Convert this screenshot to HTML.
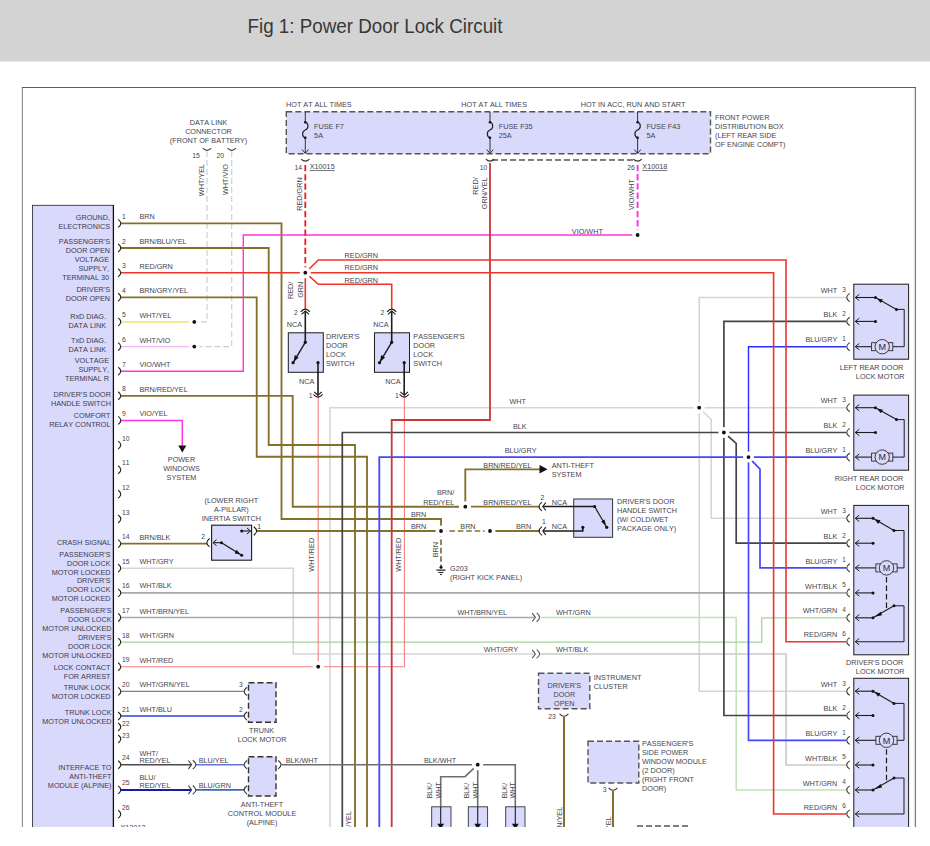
<!DOCTYPE html>
<html lang="en">
<head>
<meta charset="utf-8">
<title>Fig 1: Power Door Lock Circuit</title>
<style>
html,body{margin:0;padding:0;background:#fff;}
body{width:930px;height:846px;overflow:hidden;}
svg{display:block;}
svg text{font-family:"Liberation Sans",Arial,Helvetica,sans-serif;font-size:7.25px;fill:#45454f;font-kerning:none;}
</style>
</head>
<body>
<svg width="930" height="846" viewBox="0 0 930 846">
<defs><clipPath id="clipd"><rect x="0" y="62" width="930" height="765"/></clipPath></defs>
<rect x="0" y="0" width="930" height="61.5" fill="#d3d3d3"/>
<text x="247.5" y="33.2" style="font-size:19.4px;fill:#383838" textLength="255" lengthAdjust="spacingAndGlyphs">Fig 1: Power Door Lock Circuit</text>
<g clip-path="url(#clipd)">
<path d="M22.4 830 V87.5" stroke="#8a8a8a" stroke-width="1.1" fill="none"/>
<path d="M915.4 830 V87.5" stroke="#808080" stroke-width="1.3" fill="none"/>
<path d="M21.9 87.5 H916" stroke="#5e5e5e" stroke-width="1.1" fill="none"/>
<path d="M207.0 151.0 L207.0 321.9 L198.0 321.9" stroke="#cfcfcf" stroke-width="1.2" fill="none" stroke-dasharray="6 3"/>
<path d="M231.7 151.0 L231.7 346.6 L198.0 346.6" stroke="#cfcfcf" stroke-width="1.2" fill="none" stroke-dasharray="6 3"/>
<path d="M330.0 830.0 L330.0 407.7 L846.0 407.7" stroke="#d6d6d6" stroke-width="1.6" fill="none"/>
<path d="M846.0 297.5 L699.2 297.5 L699.2 691.2 L846.0 691.2" stroke="#d6d6d6" stroke-width="1.6" fill="none"/>
<path d="M699.2 407.7 L711.2 419.5 L711.2 518.3 L846.0 518.3" stroke="#d6d6d6" stroke-width="1.6" fill="none"/>
<path d="M121.0 568.2 L293.3 568.2 L293.3 654.0 L534.5 654.0" stroke="#d6d6d6" stroke-width="1.6" fill="none"/>
<path d="M540.5 654.0 L786.0 654.0 L786.0 765.0 L846.0 765.0" stroke="#c9c9c9" stroke-width="1.6" fill="none"/>
<path d="M121.0 592.9 L846.0 592.9" stroke="#a8a8a8" stroke-width="1.6" fill="none"/>
<path d="M121.0 617.5 L534.5 617.5" stroke="#a8a8a8" stroke-width="1.6" fill="none"/>
<path d="M540.5 617.6 L736.2 617.6 L736.2 790.0 L846.0 790.0" stroke="#bfe3b8" stroke-width="1.5" fill="none"/>
<path d="M121.0 642.1 L761.7 642.1 L761.7 617.8 L846.0 617.8" stroke="#9fd895" stroke-width="1.3" fill="none"/>
<path d="M121.0 666.7 L404.4 666.7 L404.4 394.0" stroke="#f58080" stroke-width="1.1" fill="none"/>
<path d="M318.2 666.7 L318.2 394.0" stroke="#f58080" stroke-width="1.1" fill="none"/>
<path d="M121.0 223.4 L281.5 223.4 L281.5 519.0 L441.0 519.0 L441.0 531.0" stroke="#84702a" stroke-width="1.85" fill="none"/>
<path d="M121.0 248.0 L268.7 248.0 L268.7 445.0 L355.0 445.0 L355.0 830.0" stroke="#84702a" stroke-width="1.85" fill="none"/>
<path d="M121.0 297.3 L256.7 297.3 L256.7 456.7 L367.0 456.7 L367.0 830.0" stroke="#84702a" stroke-width="1.85" fill="none"/>
<path d="M121.0 395.8 L292.7 395.8 L292.7 506.7 L459.0 506.7" stroke="#84702a" stroke-width="1.85" fill="none"/>
<path d="M471.0 506.6 L540.0 506.6" stroke="#84702a" stroke-width="1.85" fill="none"/>
<path d="M465.3 506.7 L465.3 469.3 L541.0 469.3" stroke="#84702a" stroke-width="1.85" fill="none"/>
<path d="M121.0 543.6 L207.0 543.6" stroke="#84702a" stroke-width="1.85" fill="none"/>
<path d="M257.0 531.0 L441.0 531.0" stroke="#84702a" stroke-width="1.85" fill="none"/>
<path d="M441.0 531.0 L490.0 531.0" stroke="#84702a" stroke-width="1.7" fill="none" stroke-dasharray="5.6 2.8"/>
<path d="M495.0 531.0 L540.0 531.0" stroke="#84702a" stroke-width="1.85" fill="none"/>
<path d="M441.0 531.0 L441.0 566.0" stroke="#84702a" stroke-width="1.7" fill="none" stroke-dasharray="5.6 2.8"/>
<path d="M564.0 717.0 L564.0 830.0" stroke="#84702a" stroke-width="2.0" fill="none"/>
<path d="M613.0 791.0 L613.0 830.0" stroke="#84702a" stroke-width="2.0" fill="none"/>
<path d="M342.3 830.0 L342.3 432.5 L846.0 432.5" stroke="#454545" stroke-width="1.7" fill="none"/>
<path d="M846.0 321.4 L723.9 321.4 L723.9 715.5 L846.0 715.5" stroke="#454545" stroke-width="1.7" fill="none"/>
<path d="M723.9 432.5 L736.2 443.4 L736.2 543.2 L846.0 543.2" stroke="#454545" stroke-width="1.7" fill="none"/>
<path d="M379.3 830.0 L379.3 457.1 L846.0 457.1" stroke="#4646ff" stroke-width="1.8" fill="none"/>
<path d="M846.0 346.7 L748.5 346.7 L748.5 457.1" stroke="#2c2cff" stroke-width="1.4" fill="none"/>
<path d="M748.5 457.1 L748.5 740.3 L846.0 740.3" stroke="#4646ff" stroke-width="1.7" fill="none"/>
<path d="M748.5 457.1 L760.0 469.2 L760.0 567.9 L846.0 567.9" stroke="#4646ff" stroke-width="1.7" fill="none"/>
<path d="M121.0 371.2 L243.3 371.2 L243.3 235.0 L637.6 235.0" stroke="#ff33dd" stroke-width="1.4" fill="none"/>
<path d="M637.6 164.9 L637.6 235.0" stroke="#ff33dd" stroke-width="1.9" fill="none" stroke-dasharray="6.3 2.9"/>
<path d="M121.0 420.4 L182.3 420.4 L182.3 446.0" stroke="#ff33dd" stroke-width="1.5" fill="none"/>
<path d="M178.3 445.5 H186.3 L182.3 452.5 Z" fill="#111"/>
<path d="M121.0 321.9 L189.0 321.9" stroke="#f0e428" stroke-width="1.3" fill="none"/>
<path d="M121.0 346.6 L189.0 346.6" stroke="#f2b4f2" stroke-width="1.4" fill="none"/>
<path d="M490.0 163.0 L490.0 420.0 L391.7 420.0 L391.7 830.0" stroke="#c83838" stroke-width="1.8" fill="none"/>
<path d="M121.0 272.7 L773.6 272.7 L773.6 814.0 L846.0 814.0" stroke="#f03428" stroke-width="1.6" fill="none"/>
<path d="M305.3 272.7 L318.3 260.0 L786.0 260.0 L786.0 641.7 L846.0 641.7" stroke="#f03428" stroke-width="1.6" fill="none"/>
<path d="M305.3 272.7 L318.3 284.3 L391.7 284.3 L391.7 309.0" stroke="#f03428" stroke-width="1.6" fill="none"/>
<path d="M305.3 272.7 L305.3 309.0" stroke="#f03428" stroke-width="1.6" fill="none"/>
<path d="M305.3 165.0 L305.3 272.7" stroke="#ee1c1c" stroke-width="1.8" fill="none" stroke-dasharray="6.3 2.9"/>
<path d="M121.0 691.4 L244.0 691.4" stroke="#808080" stroke-width="1.2" fill="none"/>
<path d="M121.0 716.0 L244.0 716.0" stroke="#2a44d8" stroke-width="1.4" fill="none"/>
<path d="M121.0 764.7 L191.0 764.7" stroke="#4a4a4a" stroke-width="1.4" fill="none"/>
<path d="M196.0 764.7 L244.0 764.7" stroke="#6674d8" stroke-width="1.5" fill="none"/>
<path d="M121.0 789.9 L191.0 789.9" stroke="#1a1aa8" stroke-width="2.0" fill="none"/>
<path d="M196.0 789.9 L244.0 789.9" stroke="#3a6ab0" stroke-width="1.6" fill="none"/>
<path d="M281.5 764.7 L472.0 764.7" stroke="#6e6e6e" stroke-width="1.6" fill="none"/>
<path d="M483.0 764.7 L515.3 764.7 L515.3 807.0" stroke="#6e6e6e" stroke-width="1.6" fill="none"/>
<path d="M477.7 764.7 L477.7 807.0" stroke="#6e6e6e" stroke-width="1.6" fill="none"/>
<path d="M477.7 764.7 L465.0 776.7 L440.7 776.7 L440.7 807.0" stroke="#6e6e6e" stroke-width="1.6" fill="none"/>
<circle cx="305.3" cy="272.7" r="5.5" fill="#fff"/>
<circle cx="305.3" cy="272.7" r="1.9" fill="#111"/>
<circle cx="637.6" cy="235.0" r="5.5" fill="#fff"/>
<circle cx="637.6" cy="235.0" r="1.9" fill="#111"/>
<circle cx="194.3" cy="321.9" r="5.5" fill="#fff"/>
<circle cx="194.3" cy="321.9" r="1.9" fill="#111"/>
<circle cx="194.3" cy="346.6" r="5.5" fill="#fff"/>
<circle cx="194.3" cy="346.6" r="1.9" fill="#111"/>
<circle cx="699.2" cy="407.7" r="5.5" fill="#fff"/>
<circle cx="699.2" cy="407.7" r="1.9" fill="#111"/>
<circle cx="723.9" cy="432.5" r="5.5" fill="#fff"/>
<circle cx="723.9" cy="432.5" r="1.9" fill="#111"/>
<circle cx="748.5" cy="457.1" r="5.5" fill="#fff"/>
<circle cx="748.5" cy="457.1" r="1.9" fill="#111"/>
<circle cx="465.3" cy="506.7" r="5.5" fill="#fff"/>
<circle cx="465.3" cy="506.7" r="1.9" fill="#111"/>
<circle cx="441.0" cy="531.0" r="5.5" fill="#fff"/>
<circle cx="441.0" cy="531.0" r="1.9" fill="#111"/>
<circle cx="490.0" cy="531.0" r="5.5" fill="#fff"/>
<circle cx="490.0" cy="531.0" r="1.9" fill="#111"/>
<circle cx="318.2" cy="666.7" r="5.5" fill="#fff"/>
<circle cx="318.2" cy="666.7" r="1.9" fill="#111"/>
<circle cx="477.7" cy="764.7" r="5.5" fill="#fff"/>
<circle cx="477.7" cy="764.7" r="1.9" fill="#111"/>
<rect x="32.5" y="205.3" width="81.0" height="624.7" fill="#d9d9fb" stroke="#222" stroke-width="0.8"/>
<path d="M113.4 205.0 L113.4 830.0" stroke="#111" stroke-width="1.3" fill="none"/>
<text x="110.0" y="219.9" text-anchor="end" style="fill:#3c3c50;">GROUND,</text>
<text x="110.0" y="228.8" text-anchor="end" style="fill:#3c3c50;">ELECTRONICS</text>
<text x="110.0" y="244.3" text-anchor="end" style="fill:#3c3c50;">PASSENGER'S</text>
<text x="110.0" y="253.2" text-anchor="end" style="fill:#3c3c50;">DOOR OPEN</text>
<text x="109.0" y="262.1" text-anchor="end" style="fill:#3c3c50;">VOLTAGE</text>
<text x="109.0" y="271.1" text-anchor="end" style="fill:#3c3c50;">SUPPLY,</text>
<text x="109.0" y="280.0" text-anchor="end" style="fill:#3c3c50;">TERMINAL 30</text>
<text x="110.0" y="292.4" text-anchor="end" style="fill:#3c3c50;">DRIVER'S</text>
<text x="110.0" y="301.4" text-anchor="end" style="fill:#3c3c50;">DOOR OPEN</text>
<text x="106.0" y="319.3" text-anchor="end" style="fill:#3c3c50;">RxD DIAG.</text>
<text x="106.0" y="328.2" text-anchor="end" style="fill:#3c3c50;">DATA LINK</text>
<text x="106.0" y="343.4" text-anchor="end" style="fill:#3c3c50;">TxD DIAG.</text>
<text x="106.0" y="352.4" text-anchor="end" style="fill:#3c3c50;">DATA LINK</text>
<text x="109.0" y="362.9" text-anchor="end" style="fill:#3c3c50;">VOLTAGE</text>
<text x="109.0" y="371.9" text-anchor="end" style="fill:#3c3c50;">SUPPLY,</text>
<text x="109.0" y="380.8" text-anchor="end" style="fill:#3c3c50;">TERMINAL R</text>
<text x="111.0" y="396.9" text-anchor="end" style="fill:#3c3c50;">DRIVER'S DOOR</text>
<text x="111.0" y="405.9" text-anchor="end" style="fill:#3c3c50;">HANDLE SWITCH</text>
<text x="110.5" y="418.2" text-anchor="end" style="fill:#3c3c50;">COMFORT</text>
<text x="110.5" y="427.2" text-anchor="end" style="fill:#3c3c50;">RELAY CONTROL</text>
<text x="111.0" y="544.9" text-anchor="end" style="fill:#3c3c50;">CRASH SIGNAL</text>
<text x="110.5" y="557.2" text-anchor="end" style="fill:#3c3c50;">PASSENGER'S</text>
<text x="110.5" y="566.2" text-anchor="end" style="fill:#3c3c50;">DOOR LOCK</text>
<text x="110.5" y="575.1" text-anchor="end" style="fill:#3c3c50;">MOTOR LOCKED</text>
<text x="110.5" y="583.0" text-anchor="end" style="fill:#3c3c50;">DRIVER'S</text>
<text x="110.5" y="592.0" text-anchor="end" style="fill:#3c3c50;">DOOR LOCK</text>
<text x="110.5" y="600.9" text-anchor="end" style="fill:#3c3c50;">MOTOR LOCKED</text>
<text x="111.5" y="613.3" text-anchor="end" style="fill:#3c3c50;">PASSENGER'S</text>
<text x="111.5" y="622.3" text-anchor="end" style="fill:#3c3c50;">DOOR LOCK</text>
<text x="111.5" y="631.2" text-anchor="end" style="fill:#3c3c50;">MOTOR UNLOCKED</text>
<text x="111.5" y="640.0" text-anchor="end" style="fill:#3c3c50;">DRIVER'S</text>
<text x="111.5" y="649.0" text-anchor="end" style="fill:#3c3c50;">DOOR LOCK</text>
<text x="111.5" y="657.9" text-anchor="end" style="fill:#3c3c50;">MOTOR UNLOCKED</text>
<text x="110.5" y="669.6" text-anchor="end" style="fill:#3c3c50;">LOCK CONTACT</text>
<text x="110.5" y="678.6" text-anchor="end" style="fill:#3c3c50;">FOR ARREST</text>
<text x="110.5" y="690.3" text-anchor="end" style="fill:#3c3c50;">TRUNK LOCK</text>
<text x="110.5" y="699.3" text-anchor="end" style="fill:#3c3c50;">MOTOR LOCKED</text>
<text x="111.5" y="715.3" text-anchor="end" style="fill:#3c3c50;">TRUNK LOCK</text>
<text x="111.5" y="724.3" text-anchor="end" style="fill:#3c3c50;">MOTOR UNLOCKED</text>
<text x="111.5" y="770.3" text-anchor="end" style="fill:#3c3c50;">INTERFACE TO</text>
<text x="111.5" y="779.3" text-anchor="end" style="fill:#3c3c50;">ANTI-THEFT</text>
<text x="111.5" y="788.2" text-anchor="end" style="fill:#3c3c50;">MODULE (ALPINE)</text>
<path d="M118.2 219.4 Q123.4 223.4 118.2 227.4" stroke="#1c1c1c" stroke-width="1.1" fill="none"/>
<text x="122.0" y="218.9" style="font-size:6.8px;">1</text>
<text x="139.4" y="218.9">BRN</text>
<path d="M118.2 244.0 Q123.4 248.0 118.2 252.0" stroke="#1c1c1c" stroke-width="1.1" fill="none"/>
<text x="122.0" y="243.5" style="font-size:6.8px;">2</text>
<text x="139.4" y="243.5">BRN/BLU/YEL</text>
<path d="M118.2 268.7 Q123.4 272.7 118.2 276.7" stroke="#1c1c1c" stroke-width="1.1" fill="none"/>
<text x="122.0" y="268.2" style="font-size:6.8px;">3</text>
<text x="139.4" y="269.1">RED/GRN</text>
<path d="M118.2 293.3 Q123.4 297.3 118.2 301.3" stroke="#1c1c1c" stroke-width="1.1" fill="none"/>
<text x="122.0" y="292.8" style="font-size:6.8px;">4</text>
<text x="139.4" y="292.8">BRN/GRY/YEL</text>
<path d="M118.2 317.9 Q123.4 321.9 118.2 325.9" stroke="#1c1c1c" stroke-width="1.1" fill="none"/>
<text x="122.0" y="317.4" style="font-size:6.8px;">5</text>
<text x="139.4" y="318.3">WHT/YEL</text>
<path d="M118.2 342.6 Q123.4 346.6 118.2 350.6" stroke="#1c1c1c" stroke-width="1.1" fill="none"/>
<text x="122.0" y="342.1" style="font-size:6.8px;">6</text>
<text x="139.4" y="342.9">WHT/VIO</text>
<path d="M118.2 367.2 Q123.4 371.2 118.2 375.2" stroke="#1c1c1c" stroke-width="1.1" fill="none"/>
<text x="122.0" y="366.7" style="font-size:6.8px;">7</text>
<text x="139.4" y="366.7">VIO/WHT</text>
<path d="M118.2 391.8 Q123.4 395.8 118.2 399.8" stroke="#1c1c1c" stroke-width="1.1" fill="none"/>
<text x="122.0" y="391.3" style="font-size:6.8px;">8</text>
<text x="139.4" y="392.2">BRN/RED/YEL</text>
<path d="M118.2 416.4 Q123.4 420.4 118.2 424.4" stroke="#1c1c1c" stroke-width="1.1" fill="none"/>
<text x="122.0" y="415.9" style="font-size:6.8px;">9</text>
<text x="139.4" y="415.9">VIO/YEL</text>
<path d="M118.2 441.1 Q123.4 445.1 118.2 449.1" stroke="#1c1c1c" stroke-width="1.1" fill="none"/>
<text x="122.0" y="440.6" style="font-size:6.8px;">10</text>
<path d="M118.2 465.7 Q123.4 469.7 118.2 473.7" stroke="#1c1c1c" stroke-width="1.1" fill="none"/>
<text x="122.0" y="465.2" style="font-size:6.8px;">11</text>
<path d="M118.2 490.3 Q123.4 494.3 118.2 498.3" stroke="#1c1c1c" stroke-width="1.1" fill="none"/>
<text x="122.0" y="489.8" style="font-size:6.8px;">12</text>
<path d="M118.2 515.0 Q123.4 519.0 118.2 523.0" stroke="#1c1c1c" stroke-width="1.1" fill="none"/>
<text x="122.0" y="514.5" style="font-size:6.8px;">13</text>
<path d="M118.2 539.6 Q123.4 543.6 118.2 547.6" stroke="#1c1c1c" stroke-width="1.1" fill="none"/>
<text x="122.0" y="539.1" style="font-size:6.8px;">14</text>
<text x="139.4" y="540.0">BRN/BLK</text>
<path d="M118.2 564.2 Q123.4 568.2 118.2 572.2" stroke="#1c1c1c" stroke-width="1.1" fill="none"/>
<text x="122.0" y="563.7" style="font-size:6.8px;">15</text>
<text x="139.4" y="563.7">WHT/GRY</text>
<path d="M118.2 588.9 Q123.4 592.9 118.2 596.9" stroke="#1c1c1c" stroke-width="1.1" fill="none"/>
<text x="122.0" y="588.4" style="font-size:6.8px;">16</text>
<text x="139.4" y="588.4">WHT/BLK</text>
<path d="M118.2 613.5 Q123.4 617.5 118.2 621.5" stroke="#1c1c1c" stroke-width="1.1" fill="none"/>
<text x="122.0" y="613.0" style="font-size:6.8px;">17</text>
<text x="139.4" y="613.9">WHT/BRN/YEL</text>
<path d="M118.2 638.1 Q123.4 642.1 118.2 646.1" stroke="#1c1c1c" stroke-width="1.1" fill="none"/>
<text x="122.0" y="637.6" style="font-size:6.8px;">18</text>
<text x="139.4" y="637.6">WHT/GRN</text>
<path d="M118.2 662.7 Q123.4 666.7 118.2 670.7" stroke="#1c1c1c" stroke-width="1.1" fill="none"/>
<text x="122.0" y="662.2" style="font-size:6.8px;">19</text>
<text x="139.4" y="663.1">WHT/RED</text>
<path d="M118.2 687.4 Q123.4 691.4 118.2 695.4" stroke="#1c1c1c" stroke-width="1.1" fill="none"/>
<text x="122.0" y="686.9" style="font-size:6.8px;">20</text>
<text x="139.4" y="686.9">WHT/GRN/YEL</text>
<path d="M118.2 712.0 Q123.4 716.0 118.2 720.0" stroke="#1c1c1c" stroke-width="1.1" fill="none"/>
<text x="122.0" y="711.5" style="font-size:6.8px;">21</text>
<text x="139.4" y="711.5">WHT/BLU</text>
<path d="M118.2 723.0 Q123.4 727.0 118.2 731.0" stroke="#1c1c1c" stroke-width="1.1" fill="none"/>
<text x="122.0" y="726.0" style="font-size:6.8px;">22</text>
<path d="M118.2 735.0 Q123.4 739.0 118.2 743.0" stroke="#1c1c1c" stroke-width="1.1" fill="none"/>
<text x="122.0" y="738.0" style="font-size:6.8px;">23</text>
<path d="M118.2 760.7 Q123.4 764.7 118.2 768.7" stroke="#1c1c1c" stroke-width="1.1" fill="none"/>
<text x="122.0" y="760.2" style="font-size:6.8px;">24</text>
<path d="M118.2 785.9 Q123.4 789.9 118.2 793.9" stroke="#1c1c1c" stroke-width="1.1" fill="none"/>
<text x="122.0" y="785.4" style="font-size:6.8px;">25</text>
<path d="M118.2 810.2 Q123.4 814.2 118.2 818.2" stroke="#1c1c1c" stroke-width="1.1" fill="none"/>
<text x="122.0" y="809.7" style="font-size:6.8px;">26</text>
<text x="139.4" y="755.8">WHT/</text>
<text x="139.4" y="763.2">RED/YEL</text>
<text x="139.4" y="779.8">BLU/</text>
<text x="139.4" y="787.8">RED/YEL</text>
<text x="120.5" y="829.5">X13012</text>
<text x="208.5" y="124.9" text-anchor="middle">DATA LINK</text>
<text x="208.5" y="133.9" text-anchor="middle">CONNECTOR</text>
<text x="208.5" y="142.9" text-anchor="middle">(FRONT OF BATTERY)</text>
<path d="M202.8 148.2 Q207.0 152.6 211.2 148.2" stroke="#444" stroke-width="1.1" fill="none"/>
<path d="M227.5 148.2 Q231.7 152.6 235.9 148.2" stroke="#444" stroke-width="1.1" fill="none"/>
<text x="192.3" y="158.2" style="font-size:6.8px;">15</text>
<text x="216.5" y="158.2" style="font-size:6.8px;">20</text>
<text transform="translate(203.6 196.2) rotate(-90)">WHT/YEL</text>
<text transform="translate(228.3 195.0) rotate(-90)">WHT/VIO</text>
<text x="286.0" y="106.6">HOT AT ALL TIMES</text>
<text x="461.3" y="106.6">HOT AT ALL TIMES</text>
<text x="580.7" y="106.6">HOT IN ACC, RUN AND START</text>
<rect x="286.3" y="111.8" width="424.2" height="41.9" fill="#d9d9fb" stroke="#555" stroke-width="1.4" stroke-dasharray="6 3"/>
<path d="M492.0 160.0 L635.5 160.0" stroke="#555" stroke-width="1.4" fill="none" stroke-dasharray="6 3"/>
<path d="M305.3 112.0 L305.3 122.0" stroke="#333" stroke-width="1.0" fill="none"/>
<path d="M305.3 138.0 L305.3 153.0" stroke="#333" stroke-width="1.0" fill="none"/>
<path d="M305.3 122 C308.90000000000003 123.5 308.90000000000003 128.5 305.3 130 C301.7 131.5 301.7 136.5 305.3 138" stroke="#222" stroke-width="1.2" fill="none"/>
<circle cx="305.3" cy="122.2" r="1.3" fill="#111"/>
<circle cx="305.3" cy="137.8" r="1.3" fill="#111"/>
<path d="M302.1 149.5 L305.3 153.5 L308.5 149.5" stroke="#333" stroke-width="1" fill="none"/>
<text x="314.1" y="129.2">FUSE F7</text>
<text x="314.1" y="138.0">5A</text>
<path d="M301.1 159.2 Q305.3 163.2 309.5 159.2" stroke="#333" stroke-width="1.1" fill="none"/>
<path d="M490.0 112.0 L490.0 122.0" stroke="#333" stroke-width="1.0" fill="none"/>
<path d="M490.0 138.0 L490.0 153.0" stroke="#333" stroke-width="1.0" fill="none"/>
<path d="M490 122 C493.6 123.5 493.6 128.5 490 130 C486.4 131.5 486.4 136.5 490 138" stroke="#222" stroke-width="1.2" fill="none"/>
<circle cx="490.0" cy="122.2" r="1.3" fill="#111"/>
<circle cx="490.0" cy="137.8" r="1.3" fill="#111"/>
<path d="M486.8 149.5 L490 153.5 L493.2 149.5" stroke="#333" stroke-width="1" fill="none"/>
<text x="498.8" y="129.2">FUSE F35</text>
<text x="498.8" y="138.0">25A</text>
<path d="M485.8 159.2 Q490.0 163.2 494.2 159.2" stroke="#333" stroke-width="1.1" fill="none"/>
<path d="M637.6 112.0 L637.6 122.0" stroke="#333" stroke-width="1.0" fill="none"/>
<path d="M637.6 138.0 L637.6 153.0" stroke="#333" stroke-width="1.0" fill="none"/>
<path d="M637.6 122 C641.2 123.5 641.2 128.5 637.6 130 C634.0 131.5 634.0 136.5 637.6 138" stroke="#222" stroke-width="1.2" fill="none"/>
<circle cx="637.6" cy="122.2" r="1.3" fill="#111"/>
<circle cx="637.6" cy="137.8" r="1.3" fill="#111"/>
<path d="M634.4 149.5 L637.6 153.5 L640.8000000000001 149.5" stroke="#333" stroke-width="1" fill="none"/>
<text x="646.4" y="129.2">FUSE F43</text>
<text x="646.4" y="138.0">5A</text>
<path d="M633.4 159.2 Q637.6 163.2 641.8 159.2" stroke="#333" stroke-width="1.1" fill="none"/>
<text x="294.6" y="169.8" style="font-size:6.8px;">14</text>
<text x="309.7" y="169.3" text-decoration="underline">X10015</text>
<text x="479.8" y="169.8" style="font-size:6.8px;">10</text>
<text x="627.3" y="169.5" style="font-size:6.8px;">26</text>
<text x="642.3" y="169.3" text-decoration="underline">X10018</text>
<text x="715.0" y="119.8">FRONT POWER</text>
<text x="715.0" y="128.8">DISTRIBUTION BOX</text>
<text x="715.0" y="137.9">(LEFT REAR SIDE</text>
<text x="715.0" y="146.9">OF ENGINE COMPT)</text>
<text transform="translate(301.8 210.7) rotate(-90)">RED/GRN</text>
<text transform="translate(478.3 177.3) rotate(-90)" text-anchor="end">RED/</text>
<text transform="translate(487.3 177.3) rotate(-90)" text-anchor="end">GRN/YEL</text>
<text transform="translate(634.2 210.0) rotate(-90)">VIO/WHT</text>
<text x="571.8" y="234.4">VIO/WHT</text>
<text x="344.6" y="257.6">RED/GRN</text>
<text x="344.6" y="270.4">RED/GRN</text>
<text x="344.6" y="282.6">RED/GRN</text>
<text transform="translate(293.3 281.7) rotate(-90)" text-anchor="end">RED/</text>
<text transform="translate(302.5 281.7) rotate(-90)" text-anchor="end">GRN</text>
<rect x="288.3" y="332.8" width="35.0" height="39.5" fill="#d9d9fb" stroke="#1c1c1c" stroke-width="1.0"/>
<path d="M300.7 311.8 Q305.3 306.4 309.9 311.8" stroke="#1c1c1c" stroke-width="1.1" fill="none"/>
<path d="M301.5 314.4 L305.3 311.0 L309.1 314.4" stroke="#1c1c1c" stroke-width="1.1" fill="none"/>
<path d="M305.3 311.2 L305.3 342.3" stroke="#1c1c1c" stroke-width="1.6" fill="none"/>
<path d="M305.3 342.3 L293.1 362.7" stroke="#1c1c1c" stroke-width="1.4" fill="none"/>
<path d="M293.7 361.7 L294.7 355.0 L298.7 357.6 Z" fill="#111"/>
<circle cx="305.3" cy="342.3" r="1.6" fill="#111"/>
<circle cx="293.1" cy="362.7" r="1.6" fill="#111"/>
<circle cx="318.0" cy="362.7" r="1.6" fill="#111"/>
<path d="M318.0 362.7 L318.0 394.5" stroke="#1c1c1c" stroke-width="1.6" fill="none"/>
<path d="M314.2 391.8 L318.0 395.2 L321.8 391.8" stroke="#1c1c1c" stroke-width="1.1" fill="none"/>
<path d="M313.4 394.4 Q318.0 399.8 322.6 394.4" stroke="#1c1c1c" stroke-width="1.1" fill="none"/>
<text x="294.1" y="314.6" style="font-size:6.8px;">2</text>
<text x="286.8" y="327.3">NCA</text>
<text x="299.0" y="384.2">NCA</text>
<text x="308.7" y="397.8" style="font-size:6.8px;">1</text>
<text x="326.0" y="338.9">DRIVER'S</text>
<text x="326.0" y="347.9">DOOR</text>
<text x="326.0" y="356.9">LOCK</text>
<text x="326.0" y="365.9">SWITCH</text>
<rect x="374.5" y="332.8" width="35.0" height="39.5" fill="#d9d9fb" stroke="#1c1c1c" stroke-width="1.0"/>
<path d="M387.1 311.8 Q391.7 306.4 396.3 311.8" stroke="#1c1c1c" stroke-width="1.1" fill="none"/>
<path d="M387.9 314.4 L391.7 311.0 L395.5 314.4" stroke="#1c1c1c" stroke-width="1.1" fill="none"/>
<path d="M391.7 311.2 L391.7 342.3" stroke="#1c1c1c" stroke-width="1.6" fill="none"/>
<path d="M391.7 342.3 L379.5 362.7" stroke="#1c1c1c" stroke-width="1.4" fill="none"/>
<path d="M380.1 361.7 L381.1 355.0 L385.1 357.6 Z" fill="#111"/>
<circle cx="391.7" cy="342.3" r="1.6" fill="#111"/>
<circle cx="379.5" cy="362.7" r="1.6" fill="#111"/>
<circle cx="404.2" cy="362.7" r="1.6" fill="#111"/>
<path d="M404.2 362.7 L404.2 394.5" stroke="#1c1c1c" stroke-width="1.6" fill="none"/>
<path d="M400.4 391.8 L404.2 395.2 L408.0 391.8" stroke="#1c1c1c" stroke-width="1.1" fill="none"/>
<path d="M399.6 394.4 Q404.2 399.8 408.8 394.4" stroke="#1c1c1c" stroke-width="1.1" fill="none"/>
<text x="380.5" y="314.6" style="font-size:6.8px;">2</text>
<text x="373.2" y="327.3">NCA</text>
<text x="385.2" y="384.2">NCA</text>
<text x="394.9" y="397.8" style="font-size:6.8px;">1</text>
<text x="413.3" y="338.9">PASSENGER'S</text>
<text x="413.3" y="347.9">DOOR</text>
<text x="413.3" y="356.9">LOCK</text>
<text x="413.3" y="365.9">SWITCH</text>
<text transform="translate(314.3 571.7) rotate(-90)">WHT/RED</text>
<text transform="translate(401.2 571.7) rotate(-90)">WHT/RED</text>
<text x="181.5" y="462.0" text-anchor="middle">POWER</text>
<text x="181.5" y="471.0" text-anchor="middle">WINDOWS</text>
<text x="181.5" y="480.0" text-anchor="middle">SYSTEM</text>
<text x="231.3" y="503.0" text-anchor="middle">(LOWER RIGHT</text>
<text x="231.3" y="512.0" text-anchor="middle">A-PILLAR)</text>
<text x="231.3" y="521.0" text-anchor="middle">INERTIA SWITCH</text>
<rect x="211.6" y="525.2" width="40.0" height="35.0" fill="#d9d9fb" stroke="#1c1c1c" stroke-width="1.1"/>
<text x="201.3" y="539.3" style="font-size:6.8px;">2</text>
<text x="257.3" y="528.5" style="font-size:6.8px;">1</text>
<path d="M209.6 538.5 Q204.0 542.7 209.6 546.9" stroke="#1c1c1c" stroke-width="1.1" fill="none"/>
<path d="M253.8 526.8 Q259.4 531.0 253.8 535.2" stroke="#1c1c1c" stroke-width="1.1" fill="none"/>
<path d="M213.0 542.7 L221.5 542.7" stroke="#1c1c1c" stroke-width="1.1" fill="none"/>
<path d="M216.5 539.7 L213 542.7 L216.5 545.7" stroke="#1c1c1c" stroke-width="1" fill="none"/>
<path d="M221.5 542.7 L241.7 555.3" stroke="#1c1c1c" stroke-width="1.3" fill="none"/>
<circle cx="221.5" cy="542.7" r="1.5" fill="#111"/>
<circle cx="241.7" cy="555.3" r="1.5" fill="#111"/>
<circle cx="241.7" cy="531.0" r="1.5" fill="#111"/>
<path d="M240.6 554.6 L234.6 553.4 L236.6 549.8 Z" fill="#111"/>
<path d="M241.7 531.0 L250.5 531.0" stroke="#1c1c1c" stroke-width="1.1" fill="none"/>
<path d="M247 528 L250.5 531 L247 534" stroke="#1c1c1c" stroke-width="1" fill="none"/>
<text x="509.5" y="403.8">WHT</text>
<text x="513.0" y="428.5">BLK</text>
<text x="504.7" y="452.7">BLU/GRY</text>
<text x="483.3" y="467.5">BRN/RED/YEL</text>
<path d="M539.5 465 L547.5 469.3 L539.5 473.6 Z" fill="#111"/>
<text x="551.7" y="468.2">ANTI-THEFT</text>
<text x="551.7" y="477.4">SYSTEM</text>
<text x="454.3" y="494.9" text-anchor="end">BRN/</text>
<text x="454.3" y="504.6" text-anchor="end">RED/YEL</text>
<text x="483.3" y="504.6">BRN/RED/YEL</text>
<text x="411.0" y="517.2">BRN</text>
<text x="411.0" y="528.8">BRN</text>
<text x="460.3" y="528.8">BRN</text>
<text x="516.0" y="528.8">BRN</text>
<text transform="translate(438.4 557.3) rotate(-90)">BRN</text>
<path d="M436.3 570.1 L445.5 570.1" stroke="#1c1c1c" stroke-width="1.2" fill="none"/>
<path d="M438.3 572.4 L443.5 572.4" stroke="#1c1c1c" stroke-width="1.0" fill="none"/>
<path d="M440.0 574.4 L442.0 574.4" stroke="#1c1c1c" stroke-width="1.0" fill="none"/>
<circle cx="441.0" cy="567.2" r="1.5" fill="#111"/>
<text x="450.0" y="570.8">G203</text>
<text x="450.0" y="579.8">(RIGHT KICK PANEL)</text>
<rect x="573.7" y="499.0" width="38.9" height="38.3" fill="#d9d9fb" stroke="#333" stroke-width="1.0"/>
<path d="M542.0 502.1 Q536.0 506.5 542.0 510.9" stroke="#1c1c1c" stroke-width="1.1" fill="none"/>
<path d="M545.8 502.7 L542.8 506.5 L545.8 510.3" stroke="#1c1c1c" stroke-width="1.1" fill="none"/>
<text x="540.6" y="499.7" style="font-size:6.8px;">2</text>
<text x="551.8" y="504.7">NCA</text>
<path d="M542.0 526.6 Q536.0 531.0 542.0 535.4" stroke="#1c1c1c" stroke-width="1.1" fill="none"/>
<path d="M545.8 527.2 L542.8 531.0 L545.8 534.8" stroke="#1c1c1c" stroke-width="1.1" fill="none"/>
<text x="542.0" y="524.2" style="font-size:6.8px;">1</text>
<text x="551.8" y="529.2">NCA</text>
<path d="M543.2 506.5 L594.6 506.5" stroke="#1c1c1c" stroke-width="1.6" fill="none"/>
<path d="M543.2 531.0 L582.8 531.0 L582.8 527.3" stroke="#1c1c1c" stroke-width="1.6" fill="none"/>
<path d="M594.6 506.5 L606.7 527.3" stroke="#1c1c1c" stroke-width="1.2" fill="none"/>
<path d="M605.9 526.0 L601.2 521.4 L604.6 519.4 Z" fill="#111"/>
<circle cx="594.6" cy="506.5" r="1.6" fill="#111"/>
<circle cx="606.7" cy="527.3" r="1.6" fill="#111"/>
<circle cx="582.8" cy="527.3" r="1.6" fill="#111"/>
<text x="617.0" y="504.0">DRIVER'S DOOR</text>
<text x="617.0" y="513.0">HANDLE SWITCH</text>
<text x="617.0" y="522.0">(W/ COLD/WET</text>
<text x="617.0" y="531.0">PACKAGE ONLY)</text>
<path d="M532.2 613.1 L535.4 617.3 L532.2 621.5" stroke="#555" stroke-width="1.1" fill="none"/>
<path d="M536.6 612.9 Q542.6 617.3 536.6 621.7" stroke="#555" stroke-width="1.1" fill="none"/>
<path d="M532.2 649.8 L535.4 654.0 L532.2 658.2" stroke="#555" stroke-width="1.1" fill="none"/>
<path d="M536.6 649.6 Q542.6 654.0 536.6 658.4" stroke="#555" stroke-width="1.1" fill="none"/>
<text x="457.5" y="615.0">WHT/BRN/YEL</text>
<text x="556.0" y="615.0">WHT/GRN</text>
<text x="483.8" y="651.7">WHT/GRY</text>
<text x="556.0" y="651.7">WHT/BLK</text>
<rect x="538.5" y="673.3" width="51.3" height="35.5" fill="#d9d9fb" stroke="#555" stroke-width="1.4" stroke-dasharray="6 3"/>
<text x="564.3" y="688.3" text-anchor="middle">DRIVER'S</text>
<text x="564.3" y="697.3" text-anchor="middle">DOOR</text>
<text x="564.3" y="706.3" text-anchor="middle">OPEN</text>
<text x="593.8" y="679.8">INSTRUMENT</text>
<text x="593.8" y="688.9">CLUSTER</text>
<text x="548.2" y="719.0" style="font-size:6.8px;">23</text>
<path d="M559.6 713.8 Q564.0 718.6 568.4 713.8" stroke="#333" stroke-width="1.1" fill="none"/>
<text transform="translate(561.8 806.8) rotate(-90)" text-anchor="end">BRN/YEL</text>
<rect x="588.0" y="741.3" width="50.8" height="41.7" fill="#d9d9fb" stroke="#555" stroke-width="1.4" stroke-dasharray="6 3"/>
<text x="642.0" y="745.6">PASSENGER'S</text>
<text x="642.0" y="754.7">SIDE POWER</text>
<text x="642.0" y="763.8">WINDOW MODULE</text>
<text x="642.0" y="772.9">(2 DOOR)</text>
<text x="642.0" y="782.0">(RIGHT FRONT</text>
<text x="642.0" y="791.1">DOOR)</text>
<text x="602.8" y="792.0" style="font-size:6.8px;">3</text>
<path d="M608.6 787.8 Q613.0 792.6 617.4 787.8" stroke="#333" stroke-width="1.1" fill="none"/>
<text transform="translate(610.6 816.5) rotate(-90)" text-anchor="end">BRN/YEL</text>
<path d="M637.0 826.0 L688.0 826.0" stroke="#555" stroke-width="1.4" fill="none" stroke-dasharray="6 3"/>
<text transform="translate(351.2 811.0) rotate(-90)" text-anchor="end">BRN/BLU/YEL</text>
<rect x="248.5" y="682.8" width="27.5" height="39.5" fill="#d9d9fb" stroke="#333" stroke-width="1.4" stroke-dasharray="6 3"/>
<text x="261.5" y="733.0" text-anchor="middle">TRUNK</text>
<text x="262.0" y="742.0" text-anchor="middle">LOCK MOTOR</text>
<text x="239.0" y="686.5" style="font-size:6.8px;">3</text>
<text x="239.0" y="711.5" style="font-size:6.8px;">2</text>
<path d="M247.0 687.2 Q241.4 691.4 247.0 695.6" stroke="#333" stroke-width="1.1" fill="none"/>
<path d="M247.0 711.8 Q241.4 716.0 247.0 720.2" stroke="#333" stroke-width="1.1" fill="none"/>
<rect x="248.5" y="756.8" width="27.5" height="39.2" fill="#d9d9fb" stroke="#333" stroke-width="1.4" stroke-dasharray="6 3"/>
<text x="262.0" y="807.1" text-anchor="middle">ANTI-THEFT</text>
<text x="262.0" y="816.1" text-anchor="middle">CONTROL MODULE</text>
<text x="262.0" y="825.1" text-anchor="middle">(ALPINE)</text>
<path d="M247.0 760.5 Q241.4 764.7 247.0 768.9" stroke="#333" stroke-width="1.1" fill="none"/>
<path d="M247.0 785.7 Q241.4 789.9 247.0 794.1" stroke="#333" stroke-width="1.1" fill="none"/>
<path d="M278.2 760.5 Q283.8 764.7 278.2 768.9" stroke="#333" stroke-width="1.1" fill="none"/>
<path d="M188.4 760.5 L191.6 764.7 L188.4 768.9" stroke="#444" stroke-width="1.1" fill="none"/>
<path d="M192.8 760.3 Q198.8 764.7 192.8 769.1" stroke="#444" stroke-width="1.1" fill="none"/>
<path d="M188.4 785.7 L191.6 789.9 L188.4 794.1" stroke="#444" stroke-width="1.1" fill="none"/>
<path d="M192.8 785.5 Q198.8 789.9 192.8 794.3" stroke="#444" stroke-width="1.1" fill="none"/>
<text x="198.7" y="763.2">BLU/YEL</text>
<text x="198.7" y="787.5">BLU/GRN</text>
<text x="285.7" y="762.8">BLK/WHT</text>
<text x="424.0" y="762.8">BLK/WHT</text>
<rect x="431.7" y="806.8" width="19.3" height="25.2" fill="#d9d9fb" stroke="#333" stroke-width="0.9"/>
<path d="M440.7 807.0 L440.7 824.0" stroke="#1c1c1c" stroke-width="1.1" fill="none"/>
<path d="M437.3 823.8 H444.09999999999997 L440.7 829 Z" fill="#111"/>
<text transform="translate(432.1 798.5) rotate(-90)">BLK/</text>
<text transform="translate(440.5 798.5) rotate(-90)">WHT</text>
<rect x="468.3" y="806.8" width="19.3" height="25.2" fill="#d9d9fb" stroke="#333" stroke-width="0.9"/>
<path d="M477.7 807.0 L477.7 824.0" stroke="#1c1c1c" stroke-width="1.1" fill="none"/>
<path d="M474.3 823.8 H481.09999999999997 L477.7 829 Z" fill="#111"/>
<text transform="translate(469.1 798.5) rotate(-90)">BLK/</text>
<text transform="translate(477.5 798.5) rotate(-90)">WHT</text>
<rect x="505.7" y="806.8" width="19.3" height="25.2" fill="#d9d9fb" stroke="#333" stroke-width="0.9"/>
<path d="M515.3 807.0 L515.3 824.0" stroke="#1c1c1c" stroke-width="1.1" fill="none"/>
<path d="M511.9 823.8 H518.6999999999999 L515.3 829 Z" fill="#111"/>
<text transform="translate(506.7 798.5) rotate(-90)">BLK/</text>
<text transform="translate(515.1 798.5) rotate(-90)">WHT</text>
<rect x="853.8" y="284.2" width="54.8" height="75.0" fill="#d9d9fb" stroke="#1c1c1c" stroke-width="1.0"/>
<text x="837.3" y="293.1" text-anchor="end">WHT</text>
<text x="842.2" y="291.9" style="font-size:6.5px;">3</text>
<path d="M849.7 293.4 Q843.7 297.5 849.7 301.6" stroke="#333" stroke-width="1.1" fill="none"/>
<text x="837.3" y="317.0" text-anchor="end">BLK</text>
<text x="842.2" y="315.8" style="font-size:6.5px;">2</text>
<path d="M849.7 317.3 Q843.7 321.4 849.7 325.5" stroke="#333" stroke-width="1.1" fill="none"/>
<text x="837.3" y="342.3" text-anchor="end">BLU/GRY</text>
<text x="842.2" y="341.1" style="font-size:6.5px;">1</text>
<path d="M849.7 342.6 Q843.7 346.7 849.7 350.8" stroke="#333" stroke-width="1.1" fill="none"/>
<path d="M855.3 297.5 L875.5 297.5" stroke="#1c1c1c" stroke-width="1.1" fill="none"/>
<path d="M859.3 294.3 L855.3 297.5 L859.3 300.7" stroke="#1c1c1c" stroke-width="1" fill="none"/>
<path d="M855.3 321.4 L875.5 321.4" stroke="#1c1c1c" stroke-width="1.1" fill="none"/>
<path d="M859.3 318.2 L855.3 321.4 L859.3 324.59999999999997" stroke="#1c1c1c" stroke-width="1" fill="none"/>
<path d="M855.3 346.7 L871.3 346.7" stroke="#1c1c1c" stroke-width="1.1" fill="none"/>
<path d="M859.3 343.5 L855.3 346.7 L859.3 349.9" stroke="#1c1c1c" stroke-width="1" fill="none"/>
<circle cx="875.5" cy="297.5" r="1.5" fill="#111"/>
<circle cx="875.5" cy="321.4" r="1.5" fill="#111"/>
<path d="M875.5 297.5 L896.5 309.4" stroke="#1c1c1c" stroke-width="1.1" fill="none"/>
<path d="M877.2 298.4 L883.0 299.5 L880.6 303.1 Z" fill="#111"/>
<circle cx="896.5" cy="309.4" r="1.5" fill="#111"/>
<path d="M896.5 309.4 L904.2 309.4 L904.2 346.7 L892.8 346.7" stroke="#1c1c1c" stroke-width="1.0" fill="none"/>
<rect x="871.6" y="342.7" width="4.5" height="8.0" fill="#d9d9fb" stroke="#2a2a2a" stroke-width="0.9"/>
<rect x="888.3" y="342.7" width="4.5" height="8.0" fill="#d9d9fb" stroke="#2a2a2a" stroke-width="0.9"/>
<circle cx="882.2" cy="346.7" r="7.2" fill="#d9d9fb" stroke="#2a2a2a" stroke-width="0.9"/>
<text x="882.2" y="349.9" text-anchor="middle" style="font-size:9.0px;fill:#2c2c44;">M</text>
<text x="903.3" y="369.8" text-anchor="end">LEFT REAR DOOR</text>
<text x="904.6" y="378.8" text-anchor="end">LOCK MOTOR</text>
<rect x="853.8" y="395.1" width="54.8" height="75.1" fill="#d9d9fb" stroke="#1c1c1c" stroke-width="1.0"/>
<text x="837.3" y="403.3" text-anchor="end">WHT</text>
<text x="842.2" y="402.1" style="font-size:6.5px;">3</text>
<path d="M849.7 403.6 Q843.7 407.7 849.7 411.8" stroke="#333" stroke-width="1.1" fill="none"/>
<text x="837.3" y="428.1" text-anchor="end">BLK</text>
<text x="842.2" y="426.9" style="font-size:6.5px;">2</text>
<path d="M849.7 428.4 Q843.7 432.5 849.7 436.6" stroke="#333" stroke-width="1.1" fill="none"/>
<text x="837.3" y="452.7" text-anchor="end">BLU/GRY</text>
<text x="842.2" y="451.5" style="font-size:6.5px;">1</text>
<path d="M849.7 453.0 Q843.7 457.1 849.7 461.2" stroke="#333" stroke-width="1.1" fill="none"/>
<path d="M855.3 407.7 L875.5 407.7" stroke="#1c1c1c" stroke-width="1.1" fill="none"/>
<path d="M859.3 404.5 L855.3 407.7 L859.3 410.9" stroke="#1c1c1c" stroke-width="1" fill="none"/>
<path d="M855.3 432.5 L875.5 432.5" stroke="#1c1c1c" stroke-width="1.1" fill="none"/>
<path d="M859.3 429.3 L855.3 432.5 L859.3 435.7" stroke="#1c1c1c" stroke-width="1" fill="none"/>
<path d="M855.3 457.1 L871.3 457.1" stroke="#1c1c1c" stroke-width="1.1" fill="none"/>
<path d="M859.3 453.90000000000003 L855.3 457.1 L859.3 460.3" stroke="#1c1c1c" stroke-width="1" fill="none"/>
<circle cx="875.5" cy="407.7" r="1.5" fill="#111"/>
<circle cx="875.5" cy="432.5" r="1.5" fill="#111"/>
<path d="M875.5 407.7 L896.5 419.6" stroke="#1c1c1c" stroke-width="1.1" fill="none"/>
<path d="M877.2 408.6 L883.0 409.7 L880.6 413.3 Z" fill="#111"/>
<circle cx="896.5" cy="419.6" r="1.5" fill="#111"/>
<path d="M896.5 419.6 L904.2 419.6 L904.2 457.1 L892.8 457.1" stroke="#1c1c1c" stroke-width="1.0" fill="none"/>
<rect x="871.6" y="453.1" width="4.5" height="8.0" fill="#d9d9fb" stroke="#2a2a2a" stroke-width="0.9"/>
<rect x="888.3" y="453.1" width="4.5" height="8.0" fill="#d9d9fb" stroke="#2a2a2a" stroke-width="0.9"/>
<circle cx="882.2" cy="457.1" r="7.2" fill="#d9d9fb" stroke="#2a2a2a" stroke-width="0.9"/>
<text x="882.2" y="460.3" text-anchor="middle" style="font-size:9.0px;fill:#2c2c44;">M</text>
<text x="903.3" y="480.8" text-anchor="end">RIGHT REAR DOOR</text>
<text x="904.6" y="489.8" text-anchor="end">LOCK MOTOR</text>
<rect x="853.8" y="505.4" width="54.8" height="149.4" fill="#d9d9fb" stroke="#1c1c1c" stroke-width="1.0"/>
<text x="837.3" y="513.9" text-anchor="end">WHT</text>
<text x="842.2" y="512.7" style="font-size:6.5px;">3</text>
<path d="M849.7 514.2 Q843.7 518.3 849.7 522.4" stroke="#333" stroke-width="1.1" fill="none"/>
<text x="837.3" y="538.8" text-anchor="end">BLK</text>
<text x="842.2" y="537.6" style="font-size:6.5px;">2</text>
<path d="M849.7 539.1 Q843.7 543.2 849.7 547.3" stroke="#333" stroke-width="1.1" fill="none"/>
<text x="837.3" y="563.5" text-anchor="end">BLU/GRY</text>
<text x="842.2" y="562.3" style="font-size:6.5px;">1</text>
<path d="M849.7 563.8 Q843.7 567.9 849.7 572.0" stroke="#333" stroke-width="1.1" fill="none"/>
<text x="837.3" y="588.5" text-anchor="end">WHT/BLK</text>
<text x="842.2" y="587.2" style="font-size:6.5px;">5</text>
<path d="M849.7 588.8 Q843.7 592.9 849.7 597.0" stroke="#333" stroke-width="1.1" fill="none"/>
<text x="837.3" y="613.4" text-anchor="end">WHT/GRN</text>
<text x="842.2" y="612.2" style="font-size:6.5px;">4</text>
<path d="M849.7 613.7 Q843.7 617.8 849.7 621.9" stroke="#333" stroke-width="1.1" fill="none"/>
<text x="837.3" y="637.3" text-anchor="end">RED/GRN</text>
<text x="842.2" y="636.1" style="font-size:6.5px;">6</text>
<path d="M849.7 637.6 Q843.7 641.7 849.7 645.8" stroke="#333" stroke-width="1.1" fill="none"/>
<path d="M855.3 518.3 L873.0 518.3" stroke="#1c1c1c" stroke-width="1.1" fill="none"/>
<path d="M859.3 515.0999999999999 L855.3 518.3 L859.3 521.5" stroke="#1c1c1c" stroke-width="1" fill="none"/>
<path d="M855.3 543.2 L873.0 543.2" stroke="#1c1c1c" stroke-width="1.1" fill="none"/>
<path d="M859.3 540.0 L855.3 543.2 L859.3 546.4000000000001" stroke="#1c1c1c" stroke-width="1" fill="none"/>
<path d="M855.3 567.9 L877.0 567.9" stroke="#1c1c1c" stroke-width="1.1" fill="none"/>
<path d="M859.3 564.6999999999999 L855.3 567.9 L859.3 571.1" stroke="#1c1c1c" stroke-width="1" fill="none"/>
<path d="M855.3 592.9 L873.0 592.9" stroke="#1c1c1c" stroke-width="1.1" fill="none"/>
<path d="M859.3 589.65 L855.3 592.85 L859.3 596.0500000000001" stroke="#1c1c1c" stroke-width="1" fill="none"/>
<path d="M855.3 617.8 L873.0 617.8" stroke="#1c1c1c" stroke-width="1.1" fill="none"/>
<path d="M859.3 614.5999999999999 L855.3 617.8 L859.3 621.0" stroke="#1c1c1c" stroke-width="1" fill="none"/>
<path d="M855.3 641.7 L904.0 641.7" stroke="#1c1c1c" stroke-width="1.1" fill="none"/>
<path d="M859.3 638.5 L855.3 641.7 L859.3 644.9000000000001" stroke="#1c1c1c" stroke-width="1" fill="none"/>
<circle cx="873.0" cy="518.3" r="1.5" fill="#111"/>
<circle cx="873.0" cy="543.2" r="1.5" fill="#111"/>
<circle cx="873.0" cy="592.9" r="1.5" fill="#111"/>
<circle cx="873.0" cy="617.8" r="1.5" fill="#111"/>
<path d="M873.0 518.3 L894.0 530.5" stroke="#1c1c1c" stroke-width="1.1" fill="none"/>
<path d="M874.7 519.2 L880.5 520.3 L878.1 523.9 Z" fill="#111"/>
<circle cx="894.0" cy="530.5" r="1.5" fill="#111"/>
<path d="M894.0 530.5 L904.0 530.5 L904.0 567.9 L897.0 567.9" stroke="#1c1c1c" stroke-width="1.0" fill="none"/>
<rect x="875.9" y="563.9" width="4.5" height="8.0" fill="#d9d9fb" stroke="#2a2a2a" stroke-width="0.9"/>
<rect x="892.6" y="563.9" width="4.5" height="8.0" fill="#d9d9fb" stroke="#2a2a2a" stroke-width="0.9"/>
<circle cx="886.5" cy="567.9" r="7.2" fill="#d9d9fb" stroke="#2a2a2a" stroke-width="0.9"/>
<text x="886.5" y="571.1" text-anchor="middle" style="font-size:9.0px;fill:#2c2c44;">M</text>
<path d="M886.5 576.9 L886.5 609.8" stroke="#1c1c1c" stroke-width="1.2" fill="none" stroke-dasharray="5.5 3"/>
<path d="M873.0 617.8 L894.0 605.8" stroke="#1c1c1c" stroke-width="1.1" fill="none"/>
<path d="M874.7 616.8 L880.7 611.8 L882.0 615.2 Z" fill="#111"/>
<circle cx="894.0" cy="605.8" r="1.5" fill="#111"/>
<path d="M894.0 605.8 L904.0 605.8 L904.0 641.7" stroke="#1c1c1c" stroke-width="1.0" fill="none"/>
<text x="903.3" y="665.4" text-anchor="end">DRIVER'S DOOR</text>
<text x="904.6" y="674.4" text-anchor="end">LOCK MOTOR</text>
<rect x="853.8" y="678.3" width="54.8" height="155.7" fill="#d9d9fb" stroke="#1c1c1c" stroke-width="1.0"/>
<text x="837.3" y="686.8" text-anchor="end">WHT</text>
<text x="842.2" y="685.6" style="font-size:6.5px;">3</text>
<path d="M849.7 687.1 Q843.7 691.2 849.7 695.3" stroke="#333" stroke-width="1.1" fill="none"/>
<text x="837.3" y="711.1" text-anchor="end">BLK</text>
<text x="842.2" y="709.9" style="font-size:6.5px;">2</text>
<path d="M849.7 711.4 Q843.7 715.5 849.7 719.6" stroke="#333" stroke-width="1.1" fill="none"/>
<text x="837.3" y="735.9" text-anchor="end">BLU/GRY</text>
<text x="842.2" y="734.7" style="font-size:6.5px;">1</text>
<path d="M849.7 736.2 Q843.7 740.3 849.7 744.4" stroke="#333" stroke-width="1.1" fill="none"/>
<text x="837.3" y="760.6" text-anchor="end">WHT/BLK</text>
<text x="842.2" y="759.4" style="font-size:6.5px;">5</text>
<path d="M849.7 760.9 Q843.7 765.0 849.7 769.1" stroke="#333" stroke-width="1.1" fill="none"/>
<text x="837.3" y="785.6" text-anchor="end">WHT/GRN</text>
<text x="842.2" y="784.4" style="font-size:6.5px;">4</text>
<path d="M849.7 785.9 Q843.7 790.0 849.7 794.1" stroke="#333" stroke-width="1.1" fill="none"/>
<text x="837.3" y="809.6" text-anchor="end">RED/GRN</text>
<text x="842.2" y="808.4" style="font-size:6.5px;">6</text>
<path d="M849.7 809.9 Q843.7 814.0 849.7 818.1" stroke="#333" stroke-width="1.1" fill="none"/>
<path d="M855.3 691.2 L873.0 691.2" stroke="#1c1c1c" stroke-width="1.1" fill="none"/>
<path d="M859.3 688.0 L855.3 691.2 L859.3 694.4000000000001" stroke="#1c1c1c" stroke-width="1" fill="none"/>
<path d="M855.3 715.5 L873.0 715.5" stroke="#1c1c1c" stroke-width="1.1" fill="none"/>
<path d="M859.3 712.3 L855.3 715.5 L859.3 718.7" stroke="#1c1c1c" stroke-width="1" fill="none"/>
<path d="M855.3 740.3 L877.0 740.3" stroke="#1c1c1c" stroke-width="1.1" fill="none"/>
<path d="M859.3 737.0999999999999 L855.3 740.3 L859.3 743.5" stroke="#1c1c1c" stroke-width="1" fill="none"/>
<path d="M855.3 765.0 L873.0 765.0" stroke="#1c1c1c" stroke-width="1.1" fill="none"/>
<path d="M859.3 761.8 L855.3 765 L859.3 768.2" stroke="#1c1c1c" stroke-width="1" fill="none"/>
<path d="M855.3 790.0 L873.0 790.0" stroke="#1c1c1c" stroke-width="1.1" fill="none"/>
<path d="M859.3 786.8 L855.3 790 L859.3 793.2" stroke="#1c1c1c" stroke-width="1" fill="none"/>
<path d="M855.3 814.0 L904.0 814.0" stroke="#1c1c1c" stroke-width="1.1" fill="none"/>
<path d="M859.3 810.8 L855.3 814 L859.3 817.2" stroke="#1c1c1c" stroke-width="1" fill="none"/>
<circle cx="873.0" cy="691.2" r="1.5" fill="#111"/>
<circle cx="873.0" cy="715.5" r="1.5" fill="#111"/>
<circle cx="873.0" cy="765.0" r="1.5" fill="#111"/>
<circle cx="873.0" cy="790.0" r="1.5" fill="#111"/>
<path d="M873.0 691.2 L894.0 703.4" stroke="#1c1c1c" stroke-width="1.1" fill="none"/>
<path d="M874.7 692.1 L880.5 693.2 L878.1 696.8 Z" fill="#111"/>
<circle cx="894.0" cy="703.4" r="1.5" fill="#111"/>
<path d="M894.0 703.4 L904.0 703.4 L904.0 740.3 L897.0 740.3" stroke="#1c1c1c" stroke-width="1.0" fill="none"/>
<rect x="875.9" y="736.3" width="4.5" height="8.0" fill="#d9d9fb" stroke="#2a2a2a" stroke-width="0.9"/>
<rect x="892.6" y="736.3" width="4.5" height="8.0" fill="#d9d9fb" stroke="#2a2a2a" stroke-width="0.9"/>
<circle cx="886.5" cy="740.3" r="7.2" fill="#d9d9fb" stroke="#2a2a2a" stroke-width="0.9"/>
<text x="886.5" y="743.5" text-anchor="middle" style="font-size:9.0px;fill:#2c2c44;">M</text>
<path d="M886.5 749.3 L886.5 782.0" stroke="#1c1c1c" stroke-width="1.2" fill="none" stroke-dasharray="5.5 3"/>
<path d="M873.0 790.0 L894.0 778.0" stroke="#1c1c1c" stroke-width="1.1" fill="none"/>
<path d="M874.7 789.0 L880.7 784.0 L882.0 787.4 Z" fill="#111"/>
<circle cx="894.0" cy="778.0" r="1.5" fill="#111"/>
<path d="M894.0 778.0 L904.0 778.0 L904.0 814.0" stroke="#1c1c1c" stroke-width="1.0" fill="none"/>
</g>
</svg>
</body>
</html>
